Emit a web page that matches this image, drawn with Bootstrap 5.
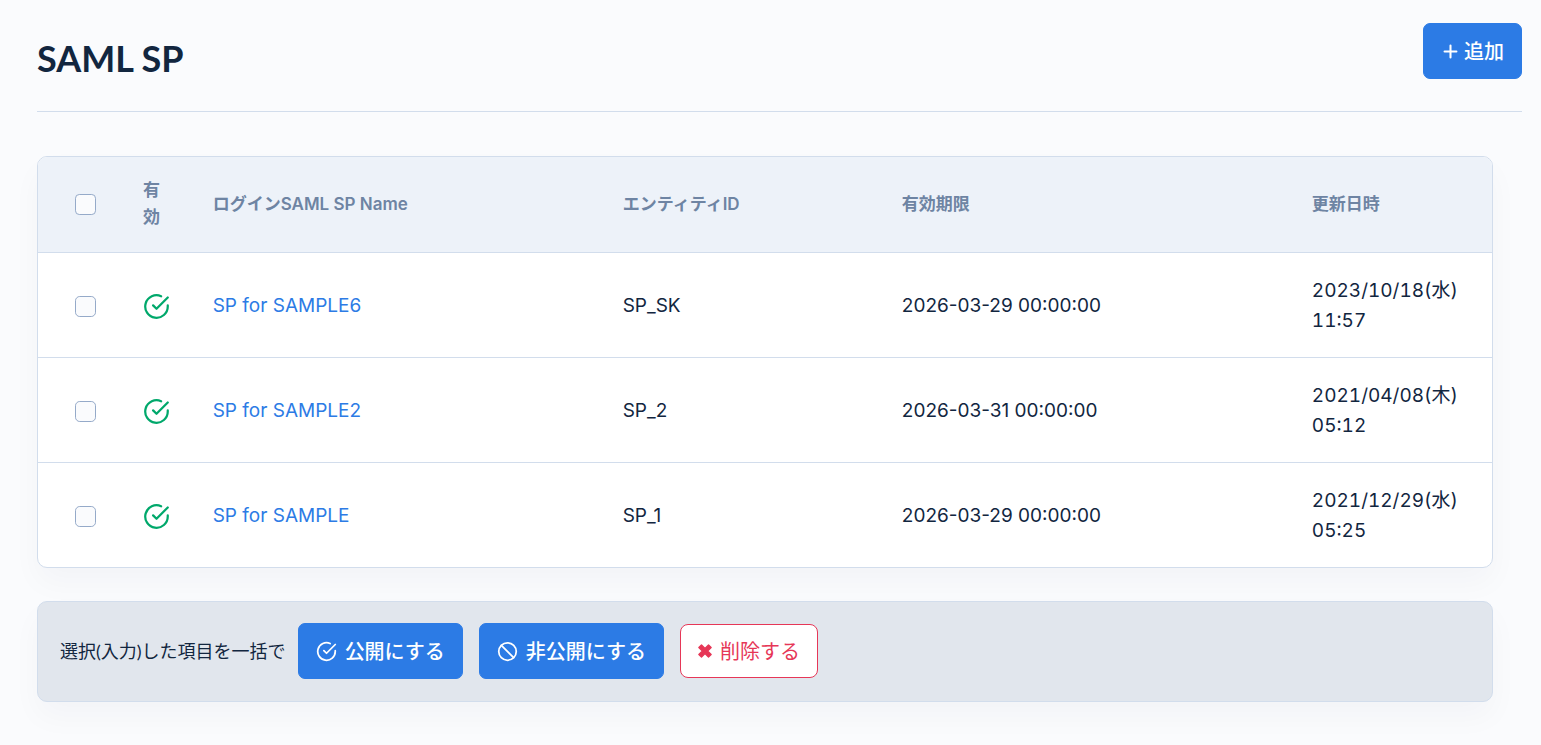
<!DOCTYPE html>
<html lang="ja">
<head>
<meta charset="utf-8">
<meta name="viewport" content="width=device-width, initial-scale=1">
<title>SAML SP</title>
<link href="https://cdn.jsdelivr.net/npm/bootstrap@5.3.0/dist/css/bootstrap.min.css" rel="stylesheet">
<style>
body { background: #fafbfd; color: #12263f; font: 400 20px/30px Lato, "Noto Sans CJK JP", sans-serif; }
.page { padding: 23px 19px 32px 37px; }
.page-head { border-bottom: 1px solid #d2ddec; padding-bottom: 32px; margin-bottom: 44px; }
.page-title { font-size: 36px; line-height: 40px; font-weight: 700; padding-top: 15px; }
.page-body { padding-right: 29px; }
.btn { --bs-btn-font-size: 20px; --bs-btn-line-height: 30px; --bs-btn-border-radius: 7px; --bs-btn-padding-x: 17px; --bs-btn-padding-y: 12px; }
.btn-primary { --bs-btn-font-weight: 500; --bs-btn-bg: #2c7be5; --bs-btn-border-color: #2c7be5; }
.btn-delete { --bs-btn-padding-y: 11px; --bs-btn-bg: #fff; --bs-btn-color: #e63757; --bs-btn-border-color: #e63757; --bs-btn-hover-bg: #e63757; --bs-btn-hover-color: #fff; --bs-btn-border-radius: 8px; }
.panel { border: 1px solid #d2ddec; border-radius: 10px; box-shadow: 0 15px 30px rgba(18, 38, 63, .03); }
.sp-panel { background: #fff; overflow: hidden; margin-bottom: 33px; }
.sp-table { table-layout: fixed; --bs-table-bg: transparent; --bs-table-color: #12263f; border-color: #d2ddec; font-family: Inter, "Noto Sans CJK JP", sans-serif; font-size: 19px; }
.sp-table > :not(caption) > * > * { padding: 22px; }
.sp-table > tbody > tr > td { padding-top: 23px; padding-bottom: 21px; }
.sp-table > thead > tr > th { background: #edf2f9; color: #6e84a3; font-size: 17px; line-height: 27px; font-weight: 600; padding-top: 20px; padding-bottom: 21px; vertical-align: middle; }
.sp-table > * > tr > :first-child { padding-left: 37px; padding-right: 0; }
.sp-table tbody tr:last-child td { border-bottom: 0; }
.sp-table tbody td:last-child { font-variant-numeric: tabular-nums; }
.sp-table a { color: #2c7be5; text-decoration: none; }
.form-check-input { width: 21px; height: 21px; margin: 0; border-color: #95aac9; border-radius: 5px; background-color: #fafbfd; }
.col-check { width: 5.7%; } .col-state { width: 4.8%; } .col-wide { width: 28.2%; } .col-entity { width: 19.2%; }
.bulk { background: #e1e6ed; padding: 21px 22px 22px; gap: 12px; }
.bulk-label { font-size: 18px; }
.ico { fill: none; stroke: currentColor; stroke-width: 2; stroke-linecap: round; stroke-linejoin: round; flex: none; }
.ico-on { color: #00a86b; }
</style>
</head>
<body>
<svg class="d-none" aria-hidden="true">
  <symbol id="check-circle" viewBox="0 0 24 24"><path d="M22 11.1V12a10 10 0 1 1-5.9-9.1M22 4 12 14l-3-3"/></symbol>
  <symbol id="slash" viewBox="0 0 24 24"><circle cx="12" cy="12" r="10"/><path d="m5 5 14 14"/></symbol>
  <symbol id="plus" viewBox="0 0 24 24"><path d="M12 4.500v15M4.500 12h15" stroke-width="2.600"/></symbol>
  <symbol id="times" viewBox="0 0 18 18"><path d="M3.500 2.900 7 6.400l3.500-3.500 2.600 2.600L9.600 9l3.500 3.500-2.600 2.600L7 11.600l-3.500 3.500-2.600-2.600L4.400 9 .9 5.500z" fill="currentColor" stroke-width="1.400"/></symbol>
</svg>
<main class="page">
  <header class="page-head d-flex justify-content-between align-items-start">
    <h1 class="page-title mb-0">SAML SP</h1>
    <button type="button" class="btn btn-primary d-flex align-items-center gap-1"><svg class="ico" width="19" height="19"><use href="#plus"/></svg>追加</button>
  </header>
  <form class="page-body">
    <div class="panel sp-panel">
      <table class="table sp-table align-middle mb-0">
        <colgroup><col class="col-check"><col class="col-state"><col class="col-wide"><col class="col-entity"><col class="col-wide"><col></colgroup>
        <thead>
          <tr>
            <th scope="col"><input class="form-check-input d-block" type="checkbox" aria-label="すべて選択"></th>
            <th scope="col">有効</th>
            <th scope="col">ログインSAML SP Name</th>
            <th scope="col">エンティティID</th>
            <th scope="col">有効期限</th>
            <th scope="col">更新日時</th>
          </tr>
        </thead>
        <tbody>
          <tr>
            <td><input class="form-check-input d-block" type="checkbox" aria-label="SP for SAMPLE6"></td>
            <td><svg class="ico ico-on d-block" width="27" height="27" role="img" aria-label="有効"><use href="#check-circle"/></svg></td>
            <td><a href="#">SP for SAMPLE6</a></td>
            <td>SP_SK</td>
            <td>2026-03-29 00:00:00</td>
            <td>2023/10/18(水) 11:57</td>
          </tr>
          <tr>
            <td><input class="form-check-input d-block" type="checkbox" aria-label="SP for SAMPLE2"></td>
            <td><svg class="ico ico-on d-block" width="27" height="27" role="img" aria-label="有効"><use href="#check-circle"/></svg></td>
            <td><a href="#">SP for SAMPLE2</a></td>
            <td>SP_2</td>
            <td>2026-03-31 00:00:00</td>
            <td>2021/04/08(木) 05:12</td>
          </tr>
          <tr>
            <td><input class="form-check-input d-block" type="checkbox" aria-label="SP for SAMPLE"></td>
            <td><svg class="ico ico-on d-block" width="27" height="27" role="img" aria-label="有効"><use href="#check-circle"/></svg></td>
            <td><a href="#">SP for SAMPLE</a></td>
            <td>SP_1</td>
            <td>2026-03-29 00:00:00</td>
            <td>2021/12/29(水) 05:25</td>
          </tr>
        </tbody>
      </table>
    </div>
    <div class="panel bulk d-flex flex-wrap align-items-center">
      <span class="bulk-label">選択(入力)した項目を一括で</span>
      <div class="d-flex flex-wrap align-items-center gap-3">
        <button type="button" class="btn btn-primary d-flex align-items-center gap-2"><svg class="ico" width="21" height="21"><use href="#check-circle"/></svg>公開にする</button>
        <button type="button" class="btn btn-primary d-flex align-items-center gap-2"><svg class="ico" width="21" height="21"><use href="#slash"/></svg>非公開にする</button>
        <button type="button" class="btn btn-delete d-flex align-items-center gap-1"><svg class="ico" width="18" height="18"><use href="#times"/></svg>削除する</button>
      </div>
    </div>
  </form>
</main>
<script src="https://cdn.jsdelivr.net/npm/bootstrap@5.3.0/dist/js/bootstrap.bundle.min.js"></script>
</body>
</html>
